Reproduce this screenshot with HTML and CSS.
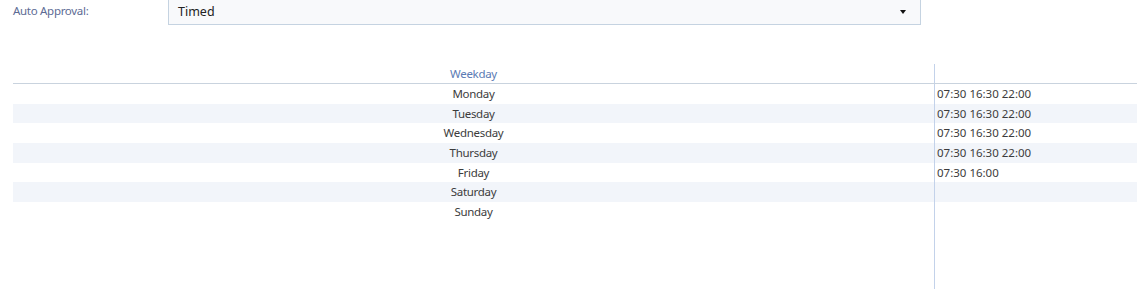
FILE: index.html
```html
<!DOCTYPE html>
<html>
<head>
<meta charset="utf-8">
<link rel="stylesheet" href="styles.css">
</head>
<body>
<div class="page">
  <div class="field">
    <span class="field-label">Auto Approval:</span>
    <div class="select">
      <span class="select-value">Timed</span>
      <span class="caret"></span>
    </div>
  </div>
  <div class="grid">
    <div class="row head">
      <div class="cell day">Weekday</div>
      <div class="cell times"></div>
    </div>
    <div class="row"><div class="cell day">Monday</div><div class="cell times">07:30 16:30 22:00</div></div>
    <div class="row alt"><div class="cell day">Tuesday</div><div class="cell times">07:30 16:30 22:00</div></div>
    <div class="row"><div class="cell day">Wednesday</div><div class="cell times">07:30 16:30 22:00</div></div>
    <div class="row alt"><div class="cell day">Thursday</div><div class="cell times">07:30 16:30 22:00</div></div>
    <div class="row"><div class="cell day">Friday</div><div class="cell times">07:30 16:00</div></div>
    <div class="row alt"><div class="cell day">Saturday</div><div class="cell times"></div></div>
    <div class="row"><div class="cell day">Sunday</div><div class="cell times"></div></div>
    <div class="row filler"><div class="cell day"></div><div class="cell times"></div></div>
  </div>
</div>
</body>
</html>
```

FILE: styles.css
```css
html, body {
  margin: 0;
  padding: 0;
  background: #ffffff;
}
body {
  font-family: "Noto Sans", "Open Sans", sans-serif;
  font-size: 11.5px;
  color: #3c3c3c;
  overflow: hidden;
}
.page {
  height: 289px;
  display: flex;
  flex-direction: column;
}
.field {
  display: flex;
  align-items: stretch;
  height: 26px;
  margin-top: -1px;
}
.field-label {
  width: 155px;
  padding-left: 13px;
  color: #5d6b94;
  font-size: 11.5px;
  letter-spacing: -0.3px;
  line-height: 24px;
}
.select {
  background: #f8f9fb;
  border: 1px solid #c5d3e1;
  display: flex;
  align-items: center;
  justify-content: space-between;
  padding: 0 14px 1px 9px;
  box-sizing: border-box;
  width: 753px;
}
.select-value {
  color: #222222;
  font-size: 12.5px;
}
.caret {
  width: 0;
  height: 0;
  border-left: 3.5px solid transparent;
  border-right: 3.5px solid transparent;
  border-top: 4px solid #111111;
}
.grid {
  margin-top: 39px;
  margin-left: 13px;
  flex: 1;
  display: flex;
  flex-direction: column;
}
.row {
  display: grid;
  grid-template-columns: 921px 1fr;
  height: 19.67px;
  line-height: 19.67px;
}
.row.alt {
  background: #f2f5fa;
}
.row.head {
  height: 20px;
  line-height: 19px;
  border-bottom: 1px solid #c9d3de;
  box-sizing: border-box;
}
.row.head .day {
  color: #5b7bb4;
}
.row.filler {
  flex: 1;
}
.cell.day {
  text-align: center;
  letter-spacing: -0.3px;
}
.cell.times {
  border-left: 1px solid #c3d2ea;
  padding-left: 2px;
  white-space: nowrap;
}
```
